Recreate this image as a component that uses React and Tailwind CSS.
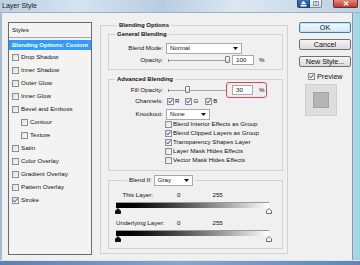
import React from 'react';

const styleItems = [
  { label: 'Drop Shadow' },
  { label: 'Inner Shadow' },
  { label: 'Outer Glow' },
  { label: 'Inner Glow' },
  { label: 'Bevel and Emboss' },
  { label: 'Contour', sub: true },
  { label: 'Texture', sub: true },
  { label: 'Satin' },
  { label: 'Color Overlay' },
  { label: 'Gradient Overlay' },
  { label: 'Pattern Overlay' },
  { label: 'Stroke', on: true },
];

const advancedChecks = [
  { label: 'Blend Interior Effects as Group', on: false },
  { label: 'Blend Clipped Layers as Group', on: true },
  { label: 'Transparency Shapes Layer', on: true },
  { label: 'Layer Mask Hides Effects', on: false },
  { label: 'Vector Mask Hides Effects', on: false },
];

const Check = ({ on }) => (
  <span className="flex h-[7px] w-[7px] shrink-0 items-center justify-center border border-[#8d8d8d] bg-linear-to-br from-[#dedede] to-[#fbfbfb]">
    {on && (
      <svg width="5" height="5" viewBox="0 0 5 5">
        <path d="M0.5 2.4 L1.9 3.9 L4.5 0.6" fill="none" stroke="#2b4b9b" strokeWidth="1" />
      </svg>
    )}
  </span>
);

const Select = ({ value, w }) => (
  <div className={`flex h-[11px] items-center justify-between border border-[#a9a9a9] bg-white pl-[3px] pr-[3px] ${w}`}>
    <span>{value}</span>
    <svg width="5" height="3" viewBox="0 0 5 3">
      <path d="M0 0 H5 L2.5 3 Z" fill="#111" />
    </svg>
  </div>
);

// track with the little thumb riding on it
const Slider = ({ pos }) => (
  <div className="relative ml-[2px] h-[8px] w-[58px]">
    <div className="absolute left-0 right-0 top-[4px] h-px bg-[#a4a4a4]" />
    <div className="absolute left-0 top-[3px] h-[3px] w-px bg-[#8a8a8a]" />
    <div
      className="absolute top-0 h-[7px] w-[5px] rounded-[1px] border border-[#7c7c7c] bg-linear-to-b from-white to-[#d9d9d9]"
      style={{ left: pos }}
    />
  </div>
);

const Field = ({ value, w }) => (
  <div className={`flex h-[10px] items-center border border-[#a9a9a9] bg-white pl-[3px] ${w}`}>{value}</div>
);

const Row = ({ label, className, children }) => (
  <div className={`flex items-center ${className}`}>
    <span className="w-[54px] text-right">{label}</span>
    <div className="ml-[3px] flex items-center">{children}</div>
  </div>
);

const Thumb = ({ dark }) => (
  <svg width="6" height="6" viewBox="0 0 6 6">
    <path
      d="M3 0.5 L5.5 3 V5.5 H0.5 V3 Z"
      fill={dark ? '#111' : '#fff'}
      stroke={dark ? '#111' : '#6a6a6a'}
      strokeWidth="1"
    />
  </svg>
);

const GradientSlider = ({ label }) => (
  <>
    <div className="mt-[4px] flex h-[10px] items-center">
      <span className="w-[37px] whitespace-nowrap text-right">{label}</span>
      <span className="ml-[24px]">0</span>
      <span className="ml-[32px]">255</span>
    </div>
    <div className="mt-[2px] h-[6px] w-[153px] border-t border-[#9a9a9a] bg-linear-to-r from-black to-white" />
    <div className="ml-[-1px] flex h-[6px] w-[157px] justify-between">
      <Thumb dark />
      <Thumb />
    </div>
  </>
);

const TitleBar = () => (
  <div className="flex h-[13px] items-start justify-between border-b border-[#9fb3c8] bg-[linear-gradient(90deg,#bccfe3_0%,#d6e3ef_22%,#b8cce1_45%,#dde7f1_66%,#bccfe3_100%)] pl-[2px] pr-[2px]">
    <span className="mt-[2px] text-[7px] leading-[8px] text-[#1b1b1b]">Layer Style</span>
    <div className="flex items-start">
      <div className="flex h-[8px] w-[13px] items-center justify-center rounded-bl-[2px] border border-t-0 border-[#27446e] bg-linear-to-b from-[#3a73c0] to-[#1b4c93]">
        <svg width="7" height="6" viewBox="0 0 7 6">
          <path d="M3.5 0 L6.5 3.2 H0.5 Z" fill="#fff" />
          <rect x="0.5" y="4" width="6" height="1.5" fill="#fff" />
        </svg>
      </div>
      <div className="flex h-[8px] w-[12px] items-center justify-center rounded-br-[2px] border border-l-0 border-t-0 border-[#7d8ea3] bg-linear-to-b from-[#f3f6fa] to-[#d5dee9]">
        <svg width="6" height="5" viewBox="0 0 6 5">
          <rect x="0.5" y="0.5" width="5" height="4" fill="none" stroke="#8894a3" strokeWidth="1" />
          <path d="M3 0.5 V4.5" stroke="#8894a3" strokeWidth="1" />
        </svg>
      </div>
      <div className="ml-[11px] flex h-[8px] w-[25px] items-center justify-center rounded-b-[2px] border border-t-0 border-[#7b2a22] bg-linear-to-b from-[#e0857a] to-[#c0392b]">
        <svg width="6" height="5" viewBox="0 0 6 5">
          <path d="M0.8 0.5 L5.2 4.5 M5.2 0.5 L0.8 4.5" stroke="#fff" strokeWidth="1.3" />
        </svg>
      </div>
    </div>
  </div>
);

const StylesList = () => (
  <div className="mt-[1px] h-[233px] w-[84px] shrink-0 border border-[#6c6c6c] bg-[#f3f3f3]">
    <div className="flex h-[15px] items-center border-b border-[#a7a7a7] pl-[3px]">Styles</div>
    <div className="flex h-[13px] items-center">
      <div className="flex h-[10px] w-full items-center bg-[#3399ff] pl-[3px] text-[6px] font-bold text-white">
        Blending Options: Custom
      </div>
    </div>
    {styleItems.map((s) => (
      <div
        key={s.label}
        className={`flex h-[13px] items-center gap-[2px] ${s.sub ? 'pl-[12px]' : 'pl-[3px]'}`}
      >
        <Check on={s.on} />
        <span>{s.label}</span>
      </div>
    ))}
  </div>
);

const BlendingOptions = () => (
  <fieldset className="ml-[8px] w-[188px] shrink-0 border border-[#d2d2d2] pb-[4px] pl-[7px] pr-[4px]">
    <legend className="ml-[9px] px-[2px] text-[6px] font-bold leading-[8px]">Blending Options</legend>

    <fieldset className="mt-[1px] border border-[#d2d2d2] pb-[3px]">
      <legend className="ml-[6px] px-[2px] text-[6px] font-bold leading-[8px]">General Blending</legend>
      <Row label="Blend Mode:" className="mt-[4px] h-[12px]">
        <Select value="Normal" w="w-[76px]" />
      </Row>
      <Row label="Opacity:" className="h-[12px]">
        <Slider pos={57} />
        <div className="ml-[6px]">
          <Field value="100" w="w-[22px]" />
        </div>
        <span className="ml-[5px]">%</span>
      </Row>
    </fieldset>

    <fieldset className="mt-[5px] border border-[#d2d2d2] pb-[5px]">
      <legend className="ml-[6px] px-[2px] text-[6px] font-bold leading-[8px]">Advanced Blending</legend>
      <Row label="Fill Opacity:" className="mt-[-1px] h-[16px]">
        <Slider pos={17} />
        <div className="flex h-[16px] items-center rounded-[3px] border border-[#e0454f] pl-[5px] pr-[1px]">
          <Field value="30" w="w-[21px]" />
          <span className="ml-[6px]">%</span>
        </div>
      </Row>
      <Row label="Channels:" className="h-[7px]">
        <div className="ml-[1px] flex items-center gap-[1px]">
          <Check on />
          <span>R</span>
        </div>
        <div className="ml-[6px] flex items-center gap-[1px]">
          <Check on />
          <span>G</span>
        </div>
        <div className="ml-[7px] flex items-center gap-[1px]">
          <Check on />
          <span>B</span>
        </div>
      </Row>
      <Row label="Knockout:" className="mt-[3px] h-[12px]">
        <Select value="None" w="w-[44px]" />
      </Row>
      {advancedChecks.map((c) => (
        <div key={c.label} className="flex h-[9px] items-center gap-[1px] pl-[56px]">
          <Check on={c.on} />
          <span>{c.label}</span>
        </div>
      ))}
    </fieldset>

    <fieldset className="mt-[3px] border border-[#d2d2d2] pb-[6px] pl-[7px]">
      <legend className="ml-[11px] flex h-[12px] items-center px-[2px]">
        <span>Blend If:</span>
        <div className="ml-[2px]">
          <Select value="Gray" w="w-[39px]" />
        </div>
      </legend>
      <GradientSlider label="This Layer:" />
      <GradientSlider label="Underlying Layer:" />
    </fieldset>
  </fieldset>
);

const Actions = () => (
  <div className="ml-[11px] mt-[1px] flex w-[52px] shrink-0 flex-col text-[7.2px]">
    <button className="flex h-[11px] items-center justify-center rounded-[2px] border border-[#3c7fb1] bg-linear-to-b from-[#f4f9fd] to-[#d6e7f4] leading-none shadow-[inset_0_0_0_1px_#bfe2f6]">
      OK
    </button>
    <button className="mt-[6px] flex h-[11px] items-center justify-center rounded-[2px] border border-[#707070] bg-linear-to-b from-[#f5f5f5] to-[#dadada] leading-none">
      Cancel
    </button>
    <button className="mt-[6px] flex h-[11px] items-center justify-center rounded-[2px] border border-[#707070] bg-linear-to-b from-[#f5f5f5] to-[#dadada] leading-none">
      New Style...
    </button>
    <div className="mt-[6px] flex h-[7px] items-center gap-[2px] pl-[9px]">
      <Check on />
      <span>Preview</span>
    </div>
    <div className="ml-[6px] mt-[4px] flex h-[32px] w-[32px] items-center justify-center border border-[#cfcfcf] bg-[#dedede]">
      <div className="h-[16px] w-[16px] border border-[#a3a3a3] bg-[#b4b4b4]" />
    </div>
  </div>
);

export default function App() {
  return (
    <div className="h-[265px] w-[360px] overflow-hidden bg-[#c3d5e8] font-['Liberation_Sans',Arial,sans-serif] text-[6.2px] leading-none text-[#111]">
      <TitleBar />
      <div className="flex h-[247px]">
        <div className="w-[2px] bg-[#a7bcd2]" />
        <div className="flex w-[351px] items-start border-r border-[#8d9aa6] bg-[#f0f0f0] pl-[6px] pt-[8px]">
          <StylesList />
          <BlendingOptions />
          <Actions />
        </div>
        <div className="flex-1 bg-linear-to-r from-[#b8d2e6] to-[#8fd9e8]" />
      </div>
      <div className="h-[5px] border-t border-[#dbe5ee] bg-linear-to-r from-[#5b7fae] via-[#86a6cb] to-[#5e87b7]" />
    </div>
  );
}
